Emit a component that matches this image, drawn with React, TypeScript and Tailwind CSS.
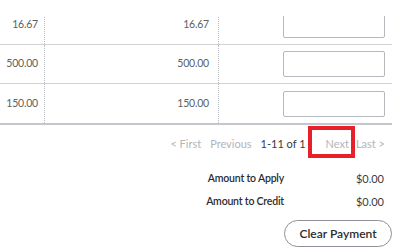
import React from "react";

const rows = [
  { original: "16.67", open: "16.67" },
  { original: "500.00", open: "500.00" },
  { original: "150.00", open: "150.00" },
];

export default function App() {
  return (
    <div className="relative w-[402px] h-[250px] bg-white overflow-hidden text-[#393a3d]" style={{ fontFamily: "Lato, 'Noto Sans', sans-serif" }}>
      {/* table, first row scrolled under the header */}
      <div className="w-[392px] mt-[6px] border-b-2 border-[#c4c6cb]">
        {rows.map((row, i) => (
          <div key={i} className={`flex h-[39px] ${i < rows.length - 1 ? "border-b border-[#cfd1d5]" : ""}`}>
            <div className="w-[45px] shrink-0 flex items-center justify-end pr-[6px] border-r border-dotted border-[#b8bbc0] text-[10.5px] tracking-[-0.2px] text-[#5c5f63]">
              {row.original}
            </div>
            <div className="w-[174px] shrink-0 flex items-center justify-end pr-[9px] border-r border-dotted border-[#b8bbc0] text-[10.5px] tracking-[-0.2px] text-[#5c5f63]">
              {row.open}
            </div>
            <div className="flex-1 flex items-center pl-[64px]">
              <div className="w-[102px] h-[26px] rounded-[2px] border border-[#b5b8bd] bg-white" />
            </div>
          </div>
        ))}
      </div>
      <div className="absolute top-0 left-0 w-full h-[16px] bg-white" />

      {/* pagination */}
      <div className="relative flex items-center justify-end h-[39px] pr-[17px] text-[11px]">
        <span className="text-[#b3b5b9] mr-[9px]">&lt; First</span>
        <span className="text-[#b3b5b9] mr-[9px]">Previous</span>
        <span className="text-[#393a3d] mr-[20px]">1-11 of 1</span>
        <span className="text-[#b3b5b9] mr-[7px]">Next</span>
        <span className="text-[#b3b5b9]">Last &gt;</span>
        <div className="absolute left-[308px] top-[1px] w-[47px] h-[32px] border-[4px] border-[#e8202a]" />
      </div>

      {/* totals */}
      <div className="flex flex-col items-end pr-[18px] mt-[7px] gap-[6px] text-[10.5px]">
        <div className="flex items-center">
          <span className="font-semibold tracking-[-0.2px] text-[#2b2c2e]">Amount to Apply</span>
          <span className="w-[100px] text-right text-[11px] text-[#393a3d]">$0.00</span>
        </div>
        <div className="flex items-center">
          <span className="font-semibold tracking-[-0.2px] text-[#2b2c2e]">Amount to Credit</span>
          <span className="w-[100px] text-right text-[11px] text-[#393a3d]">$0.00</span>
        </div>
      </div>

      <div className="flex justify-end pr-[10px] mt-[10px]">
        <button className="w-[108px] h-[27px] rounded-full border border-[#8d9096] text-[12px] font-semibold text-[#2b2c2e] bg-white">
          Clear Payment
        </button>
      </div>
    </div>
  );
}
